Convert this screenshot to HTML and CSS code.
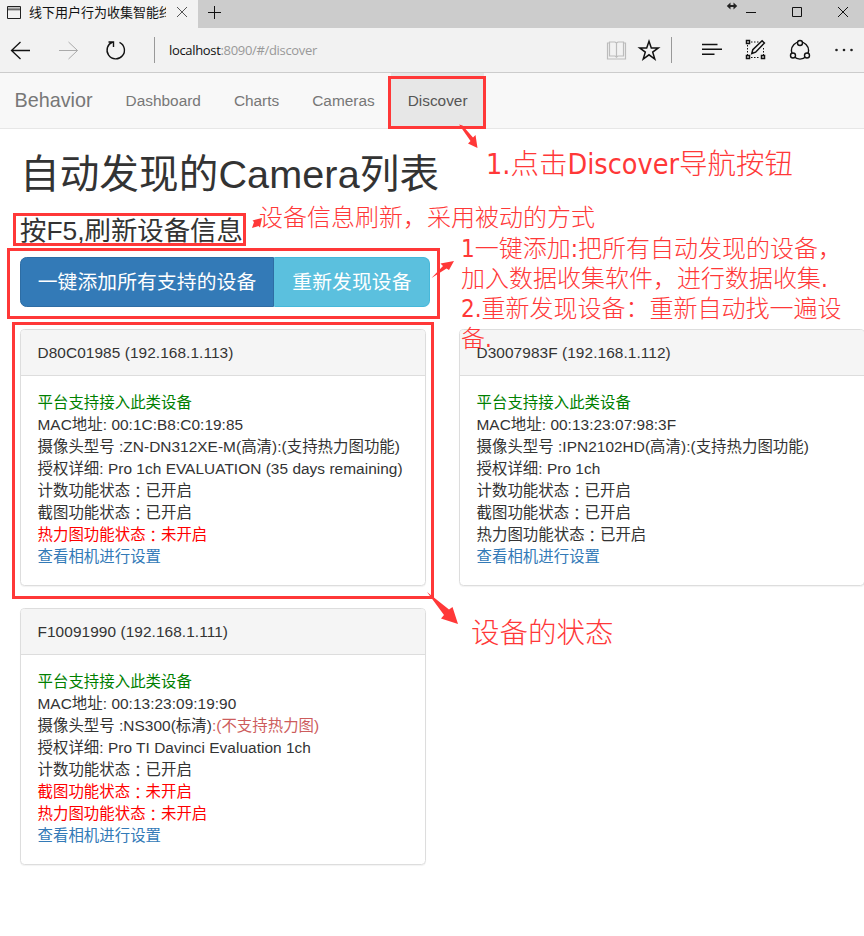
FILE: index.html
```html
<!DOCTYPE html>
<html lang="zh-CN">
<head>
<meta charset="utf-8">
<title>线下用户行为收集智能终端</title>
<link rel="stylesheet" href="styles.css">
</head>
<body>
<div class="window">
  <header class="tabbar">
    <div class="tab">
      <svg class="page-icon" width="14" height="13" viewBox="0 0 14 13"><path d="M.5 .5h13v12H.5z" fill="none" stroke="#222"/><path d="M1 2.5h12" stroke="#999" stroke-width="2"/><path d="M1 3.8h12" stroke="#222" stroke-width=".8"/></svg>
      <span class="tab-title">线下用户行为收集智能终端</span>
      <svg width="10" height="10" viewBox="0 0 10 10" class="thin"><path d="M0 0l10 10M10 0L0 10"/></svg>
    </div>
    <svg class="new-tab" width="13" height="13" viewBox="0 0 13 13"><path d="M6.5 0v13M0 6.5h13"/></svg>
    <svg class="controls" width="126" height="28" viewBox="0 0 126 28">
      <path d="M2 6h8" stroke-width="1.8"/><path d="M4.500 2.500L.8 6l3.700 3.500zM7.500 2.500l3.700 3.500-3.700 3.500z" fill="#222" stroke="none"/>
      <path d="M20 12.500h10M66.500 7.500h9v9h-9zM112 7l10 10M122 7l-10 10"/>
    </svg>
  </header>
  <div class="toolbar">
    <svg class="nav-icons" width="126" height="44" viewBox="0 0 126 44">
      <path d="M30 22.500H11.500M20.500 14l-9 8.500 9 8.500" stroke-width="1.3"/>
      <path d="M59 22.500h18.500M68.500 14l9 8.500-9 8.500" stroke="#aaa"/>
      <path d="M119.500 14.300a8.700 8.700 0 1 1-6.800-.3M108.500 14h5v5" stroke-width="1.4"/>
    </svg>
    <span class="divider url-divider"></span>
    <span class="url"><b>localhost</b>:8090/#/discover</span>
    <svg class="tools" width="258" height="44" viewBox="0 0 258 44">
      <path d="M3.500 15H1.500v16h18V15h-2M3.500 14h5.500l1.500 1 1.500-1h5.500v14h-5.500l-1.500 1-1.500-1H3.500zM10.500 15v15" stroke="#bcbcbc" stroke-width="1.2"/>
      <path d="M43 13.300l2.300 6.600h7l-5.600 4.200 2.100 6.900-5.800-4.200-5.800 4.200 2.100-6.900-5.600-4.200h7z" stroke-width="1.5"/>
      <path d="M65.500 9v26" stroke="#999"/>
      <path d="M96 16.500h15.500M96 21.300h20M96 26.300h12.500" stroke-width="1.4"/>
      <path d="M145 14h8M141.500 17v10M145 29.500h9M157.500 20v7" stroke-dasharray="1.500 1.500"/>
      <path d="M140.500 12.500h3v3h-3zM140.500 27.500h3v3h-3zM155.500 27.500h3v3h-3z" stroke-width="1.5"/>
      <path d="M145.800 25.500l1-3.800 9.300-9 2.300 2.300-8.800 9.200z" stroke-width="1.5"/>
      <circle cx="194" cy="22.500" r="8.600" stroke-width="1.4"/>
      <g fill="#f2f2f2" stroke-width="1.400"><circle cx="194" cy="15" r="2.500"/><circle cx="187" cy="27.500" r="2.500"/><circle cx="201" cy="27.500" r="2.500"/></g>
      <g fill="#222" stroke="none"><circle cx="230.500" cy="22" r="1.300"/><circle cx="238" cy="22" r="1.300"/><circle cx="245.500" cy="22" r="1.300"/></g>
    </svg>
  </div>

  <nav class="navbar">
    <a class="brand">Behavior</a>
    <a class="nav-link">Dashboard</a>
    <a class="nav-link">Charts</a>
    <a class="nav-link">Cameras</a>
    <a class="nav-link active">Discover</a>
  </nav>

  <main class="content">
    <h1>自动发现的Camera列表</h1>
    <h3>按F5,刷新设备信息</h3>
    <div class="btn-group">
      <button class="btn primary">一键添加所有支持的设备</button><button class="btn info">重新发现设备</button>
    </div>
    <div class="cards">
      <section class="card">
        <div class="card-head">D80C01985 (192.168.1.113)</div>
        <div class="card-body">
          <div class="ok">平台支持接入此类设备</div>
          <div>MAC地址: 00:1C:B8:C0:19:85</div>
          <div>摄像头型号 :ZN-DN312XE-M(高清):(支持热力图功能)</div>
          <div>授权详细: Pro 1ch EVALUATION (35 days remaining)</div>
          <div>计数功能状态<i>：</i>已开启</div>
          <div>截图功能状态<i>：</i>已开启</div>
          <div class="off">热力图功能状态<i>：</i>未开启</div>
          <a class="link">查看相机进行设置</a>
        </div>
      </section>
      <section class="card">
        <div class="card-head">D3007983F (192.168.1.112)</div>
        <div class="card-body">
          <div class="ok">平台支持接入此类设备</div>
          <div>MAC地址: 00:13:23:07:98:3F</div>
          <div>摄像头型号 :IPN2102HD(高清):(支持热力图功能)</div>
          <div>授权详细: Pro 1ch</div>
          <div>计数功能状态<i>：</i>已开启</div>
          <div>截图功能状态<i>：</i>已开启</div>
          <div>热力图功能状态<i>：</i>已开启</div>
          <a class="link">查看相机进行设置</a>
        </div>
      </section>
      <section class="card">
        <div class="card-head">F10091990 (192.168.1.111)</div>
        <div class="card-body">
          <div class="ok">平台支持接入此类设备</div>
          <div>MAC地址: 00:13:23:09:19:90</div>
          <div>摄像头型号 :NS300(标清)<span class="warn">:(不支持热力图)</span></div>
          <div>授权详细: Pro TI Davinci Evaluation 1ch</div>
          <div>计数功能状态<i>：</i>已开启</div>
          <div class="off">截图功能状态<i>：</i>未开启</div>
          <div class="off">热力图功能状态<i>：</i>未开启</div>
          <a class="link">查看相机进行设置</a>
        </div>
      </section>
    </div>
  </main>

  <svg class="marks" width="864" height="936" viewBox="0 0 864 936">
    <g fill="none" stroke="#ff3838" stroke-width="3">
      <path d="M389.500 77.500h95v50h-95zM14.500 214.500h230v30h-230zM8.500 249.500h430v68h-430zM13.500 323.500h419v274h-419z"/>
    </g>
    <g fill="#ff3838">
      <path d="M459 124.500l3.500 1 10.500 12 2.500-2.500 2 13-9.500-4.500 2.500-2.500z"/>
      <path d="M262 218l-2 9.500-1.500-1.500-6.500 2 2-6-1.500-1.500z"/>
      <path d="M431.500 278l11.500-12-2.500-2.500 13.500-2.500-5 9-2.500-1.500z"/>
      <path d="M427 592l22 17.500 3.500-2.500 5.500 17-17-5.500 3-3.500z"/>
    </g>
  </svg>
  <div class="note note-nav">1.点击Discover导航按钮</div>
  <div class="note note-refresh">设备信息刷新，采用被动的方式</div>
  <div class="note note-buttons">1一键添加:把所有自动发现的设备，<br>加入数据收集软件，进行数据收集.<br>2.重新发现设备：重新自动找一遍设<br>备.</div>
  <div class="note note-status">设备的状态</div>
</div>
</body>
</html>
```
FILE: styles.css
```css
* { box-sizing: border-box; }
body { margin: 0; background: #fff; }
.window {
  position: relative;
  width: 864px;
  height: 936px;
  overflow: hidden;
  color: #333;
  font: 15.4px/22px "Liberation Sans", "Noto Sans CJK SC", sans-serif;
}
svg { display: block; flex: none; fill: none; stroke: #111; }

.tabbar { display: flex; height: 28px; background: #ccc; }
.tab {
  display: flex;
  align-items: center;
  width: 198px;
  height: 28px;
  padding: 0 11px 4px 7px;
  background: #f2f2f2;
}
.tab-title {
  width: 137px;
  margin: 0 11px 0 8px;
  overflow: hidden;
  white-space: nowrap;
  color: #111;
  font: 13px/20px "Noto Sans CJK SC", sans-serif;
}
.thin { stroke: #555; }
.new-tab { margin: 6px 0 0 10px; }
.controls { margin-left: auto; margin-right: 12px; }

.toolbar {
  display: flex;
  align-items: center;
  height: 45px;
  background: #f2f2f2;
  border-bottom: 1px solid #ccc;
}
.divider { width: 1px; height: 26px; background: #999; }
.url-divider { margin: 0 14px 0 28px; }
.url { color: #999; font: 13px/20px "Open Sans", "Noto Sans", sans-serif; letter-spacing: -.33px; white-space: nowrap; }
.url b { color: #111; font-weight: 400; }
.tools { margin-left: auto; }

.navbar {
  display: flex;
  height: 56px;
  background: #f8f8f8;
  border-bottom: 1px solid #e7e7e7;
  color: #777;
  line-height: 55px;
}
.brand { padding: 0 16.5px 0 14.5px; font-size: 19.8px; }
.nav-link { padding: 0 16.5px; }
.active { color: #555; background: #e7e7e7; }

.content { padding: 0 0 0 20px; }
h1, h3 { margin: 0; font-weight: 400; white-space: nowrap; }
h1 { padding-top: 21px; font-size: 39.6px; line-height: 48px; letter-spacing: .1px; }
h3 { margin-top: 17px; font-size: 26.4px; line-height: 32px; }
.btn-group { display: flex; width: 410px; height: 50px; margin: 10px 0 22px; }
.btn {
  padding: 0;
  border: 1px solid;
  color: #fff;
  font: 19.8px/26px "Liberation Sans", "Noto Sans CJK SC", sans-serif;
  letter-spacing: .1px;
  white-space: nowrap;
}
.primary { width: 254px; background: #337ab7; border-color: #2e6da4; border-radius: 6.6px 0 0 6.6px; }
.info { width: 156px; background: #5bc0de; border-color: #46b8da; border-left-color: #5bc0de; border-radius: 0 6.6px 6.6px 0; }

.cards { display: grid; grid-template-columns: 406px 406px; gap: 22.500px 33px; width: 845px; }
.card {
  height: 256.500px;
  border: 1px solid #ddd;
  border-radius: 4.4px;
  box-shadow: 0 1px 1px rgba(0, 0, 0, .05);
  overflow: hidden;
  white-space: nowrap;
}
.card-head { height: 46px; padding: 12px 16.5px 0; background: #f5f5f5; border-bottom: 1px solid #ddd; letter-spacing: .08px; }
.card-body { padding: 16px 16.5px; letter-spacing: .05px; }
.card-body > * { display: block; height: 22px; }
.card i {
  display: inline-block;
  width: 1em;
  height: 22px;
  vertical-align: top;
  font-family: "Noto Sans CJK TC", sans-serif;
  font-style: normal;
}
.ok { color: green; }
.off { color: red; }
.warn { color: #cd5c5c; }
.link { color: #337ab7; }

.marks { position: absolute; left: 0; top: 0; stroke: none; }
.note {
  position: absolute;
  color: #ff3838;
  font-family: "DejaVu Sans Condensed", "Noto Sans CJK SC", sans-serif;
  font-weight: 300;
  font-size: 24px;
  line-height: 30px;
  white-space: nowrap;
}
.note-nav { left: 486px; top: 150px; font-size: 28.500px; }
.note-refresh { left: 259px; top: 203px; }
.note-buttons { left: 461px; top: 234px; }
.note-status { left: 471px; top: 619px; font-size: 28.500px; }
```
